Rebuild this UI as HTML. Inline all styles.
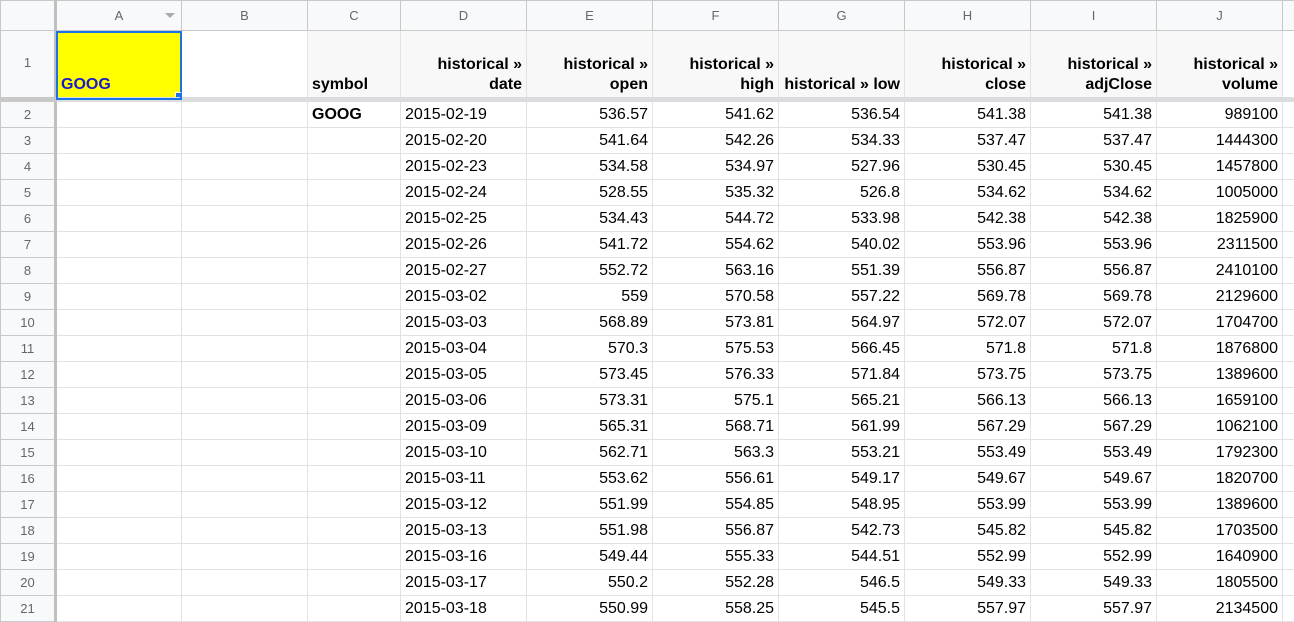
<!DOCTYPE html>
<html><head><style>
body{margin:0;width:1294px;height:616px;overflow:hidden;background:#fff;font-family:"Liberation Sans",Arial,sans-serif;}
table{border-collapse:collapse;table-layout:fixed;position:absolute;left:0;top:0;width:1322px;}
td{border:1px solid #e2e2e2;padding:0 4px;font-size:16px;color:#000;white-space:nowrap;overflow:hidden;text-align:right;height:25px;line-height:25px;}
tr.ch td{background:#f8f9fa;color:#666;font-size:13px;text-align:center;height:29px;border-color:#c8c8c8;}
td.rh{background:#f8f9fa;color:#666;font-size:13px;text-align:center;border-color:#c8c8c8;}
tr.r1 td{height:64px;vertical-align:bottom;line-height:20px;font-weight:bold;padding-bottom:2px;background:#f8f8f8;border-bottom:5px solid #dadce0;}
tr.r1 td.rh{vertical-align:middle;font-weight:normal;background:#f8f9fa;border-bottom-color:#c8c8c8;}
</style></head><body>
<table>
<colgroup><col style="width:55px"><col style="width:126px"><col style="width:126px"><col style="width:93px"><col style="width:126px"><col style="width:126px"><col style="width:126px"><col style="width:126px"><col style="width:126px"><col style="width:126px"><col style="width:126px"><col style="width:40px"></colgroup>
<tr class="ch"><td style="border-right:3px solid #c0c0c0"></td><td style="position:relative">A<span style="position:absolute;right:6px;top:12px;width:0;height:0;border-left:5px solid transparent;border-right:5px solid transparent;border-top:5px solid #aaa"></span></td><td>B</td><td>C</td><td>D</td><td>E</td><td>F</td><td>G</td><td>H</td><td>I</td><td>J</td><td></td></tr>
<tr class="r1"><td class="rh" style="border-right:3px solid #c0c0c0">1</td><td style="background:#ffff00;color:#1a1acc;text-align:left;outline:2px solid #1a73e8;outline-offset:-2px;position:relative">GOOG<span style="position:absolute;right:-3px;bottom:-4px;width:7px;height:7px;background:#1a73e8;border:1px solid #fff"></span></td><td style="background:#fff"></td><td style="text-align:left">symbol</td><td>historical »<br>date</td><td>historical »<br>open</td><td>historical »<br>high</td><td>historical » low</td><td>historical »<br>close</td><td>historical »<br>adjClose</td><td>historical »<br>volume</td><td style="background:#fff"></td></tr>
<tr><td class="rh" style="border-right:3px solid #c0c0c0">2</td><td></td><td></td><td style="text-align:left;font-weight:bold">GOOG</td><td style="text-align:left">2015-02-19</td><td>536.57</td><td>541.62</td><td>536.54</td><td>541.38</td><td>541.38</td><td>989100</td><td></td></tr>
<tr><td class="rh" style="border-right:3px solid #c0c0c0">3</td><td></td><td></td><td></td><td style="text-align:left">2015-02-20</td><td>541.64</td><td>542.26</td><td>534.33</td><td>537.47</td><td>537.47</td><td>1444300</td><td></td></tr>
<tr><td class="rh" style="border-right:3px solid #c0c0c0">4</td><td></td><td></td><td></td><td style="text-align:left">2015-02-23</td><td>534.58</td><td>534.97</td><td>527.96</td><td>530.45</td><td>530.45</td><td>1457800</td><td></td></tr>
<tr><td class="rh" style="border-right:3px solid #c0c0c0">5</td><td></td><td></td><td></td><td style="text-align:left">2015-02-24</td><td>528.55</td><td>535.32</td><td>526.8</td><td>534.62</td><td>534.62</td><td>1005000</td><td></td></tr>
<tr><td class="rh" style="border-right:3px solid #c0c0c0">6</td><td></td><td></td><td></td><td style="text-align:left">2015-02-25</td><td>534.43</td><td>544.72</td><td>533.98</td><td>542.38</td><td>542.38</td><td>1825900</td><td></td></tr>
<tr><td class="rh" style="border-right:3px solid #c0c0c0">7</td><td></td><td></td><td></td><td style="text-align:left">2015-02-26</td><td>541.72</td><td>554.62</td><td>540.02</td><td>553.96</td><td>553.96</td><td>2311500</td><td></td></tr>
<tr><td class="rh" style="border-right:3px solid #c0c0c0">8</td><td></td><td></td><td></td><td style="text-align:left">2015-02-27</td><td>552.72</td><td>563.16</td><td>551.39</td><td>556.87</td><td>556.87</td><td>2410100</td><td></td></tr>
<tr><td class="rh" style="border-right:3px solid #c0c0c0">9</td><td></td><td></td><td></td><td style="text-align:left">2015-03-02</td><td>559</td><td>570.58</td><td>557.22</td><td>569.78</td><td>569.78</td><td>2129600</td><td></td></tr>
<tr><td class="rh" style="border-right:3px solid #c0c0c0">10</td><td></td><td></td><td></td><td style="text-align:left">2015-03-03</td><td>568.89</td><td>573.81</td><td>564.97</td><td>572.07</td><td>572.07</td><td>1704700</td><td></td></tr>
<tr><td class="rh" style="border-right:3px solid #c0c0c0">11</td><td></td><td></td><td></td><td style="text-align:left">2015-03-04</td><td>570.3</td><td>575.53</td><td>566.45</td><td>571.8</td><td>571.8</td><td>1876800</td><td></td></tr>
<tr><td class="rh" style="border-right:3px solid #c0c0c0">12</td><td></td><td></td><td></td><td style="text-align:left">2015-03-05</td><td>573.45</td><td>576.33</td><td>571.84</td><td>573.75</td><td>573.75</td><td>1389600</td><td></td></tr>
<tr><td class="rh" style="border-right:3px solid #c0c0c0">13</td><td></td><td></td><td></td><td style="text-align:left">2015-03-06</td><td>573.31</td><td>575.1</td><td>565.21</td><td>566.13</td><td>566.13</td><td>1659100</td><td></td></tr>
<tr><td class="rh" style="border-right:3px solid #c0c0c0">14</td><td></td><td></td><td></td><td style="text-align:left">2015-03-09</td><td>565.31</td><td>568.71</td><td>561.99</td><td>567.29</td><td>567.29</td><td>1062100</td><td></td></tr>
<tr><td class="rh" style="border-right:3px solid #c0c0c0">15</td><td></td><td></td><td></td><td style="text-align:left">2015-03-10</td><td>562.71</td><td>563.3</td><td>553.21</td><td>553.49</td><td>553.49</td><td>1792300</td><td></td></tr>
<tr><td class="rh" style="border-right:3px solid #c0c0c0">16</td><td></td><td></td><td></td><td style="text-align:left">2015-03-11</td><td>553.62</td><td>556.61</td><td>549.17</td><td>549.67</td><td>549.67</td><td>1820700</td><td></td></tr>
<tr><td class="rh" style="border-right:3px solid #c0c0c0">17</td><td></td><td></td><td></td><td style="text-align:left">2015-03-12</td><td>551.99</td><td>554.85</td><td>548.95</td><td>553.99</td><td>553.99</td><td>1389600</td><td></td></tr>
<tr><td class="rh" style="border-right:3px solid #c0c0c0">18</td><td></td><td></td><td></td><td style="text-align:left">2015-03-13</td><td>551.98</td><td>556.87</td><td>542.73</td><td>545.82</td><td>545.82</td><td>1703500</td><td></td></tr>
<tr><td class="rh" style="border-right:3px solid #c0c0c0">19</td><td></td><td></td><td></td><td style="text-align:left">2015-03-16</td><td>549.44</td><td>555.33</td><td>544.51</td><td>552.99</td><td>552.99</td><td>1640900</td><td></td></tr>
<tr><td class="rh" style="border-right:3px solid #c0c0c0">20</td><td></td><td></td><td></td><td style="text-align:left">2015-03-17</td><td>550.2</td><td>552.28</td><td>546.5</td><td>549.33</td><td>549.33</td><td>1805500</td><td></td></tr>
<tr><td class="rh" style="border-right:3px solid #c0c0c0">21</td><td></td><td></td><td></td><td style="text-align:left">2015-03-18</td><td>550.99</td><td>558.25</td><td>545.5</td><td>557.97</td><td>557.97</td><td>2134500</td><td></td></tr>
</table>
</body></html>
